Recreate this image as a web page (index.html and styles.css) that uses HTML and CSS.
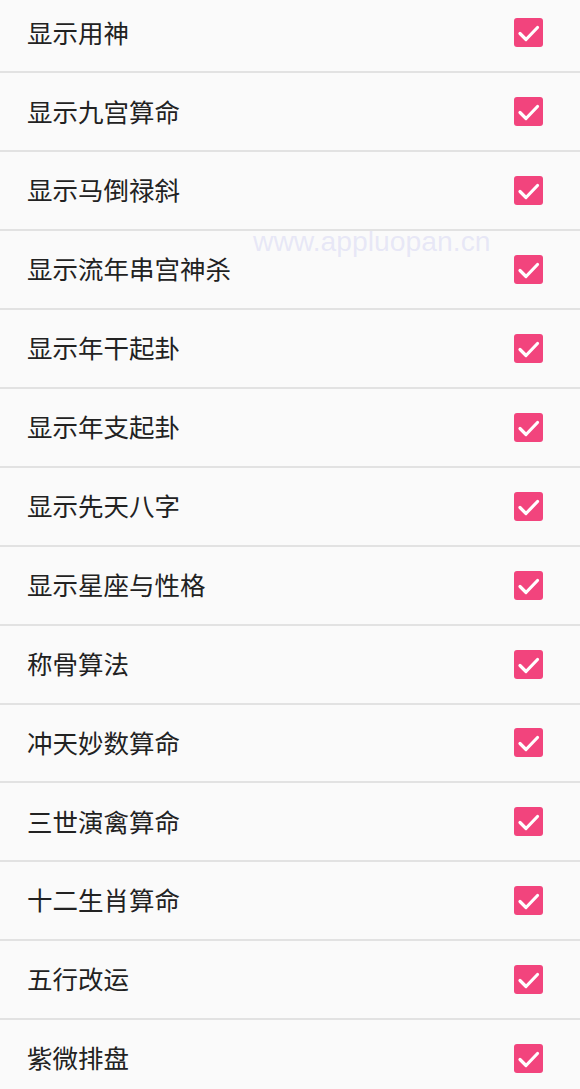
FILE: index.html
```html
<!DOCTYPE html>
<html lang="zh">
<head>
<meta charset="utf-8">
<link rel="stylesheet" href="styles.css">
</head>
<body>
<div class="page">
  <ul class="list">
    <li class="row"><span class="label">显示用神</span><span class="box"><svg viewBox="0 0 29 29"><path d="M6 15.5 L12 21.5 L23.5 9.5"/></svg></span></li>
    <li class="row"><span class="label">显示九宫算命</span><span class="box"><svg viewBox="0 0 29 29"><path d="M6 15.5 L12 21.5 L23.5 9.5"/></svg></span></li>
    <li class="row"><span class="label">显示马倒禄斜</span><span class="box"><svg viewBox="0 0 29 29"><path d="M6 15.5 L12 21.5 L23.5 9.5"/></svg></span></li>
    <li class="row"><span class="label">显示流年串宫神杀</span><span class="box"><svg viewBox="0 0 29 29"><path d="M6 15.5 L12 21.5 L23.5 9.5"/></svg></span></li>
    <li class="row"><span class="label">显示年干起卦</span><span class="box"><svg viewBox="0 0 29 29"><path d="M6 15.5 L12 21.5 L23.5 9.5"/></svg></span></li>
    <li class="row"><span class="label">显示年支起卦</span><span class="box"><svg viewBox="0 0 29 29"><path d="M6 15.5 L12 21.5 L23.5 9.5"/></svg></span></li>
    <li class="row"><span class="label">显示先天八字</span><span class="box"><svg viewBox="0 0 29 29"><path d="M6 15.5 L12 21.5 L23.5 9.5"/></svg></span></li>
    <li class="row"><span class="label">显示星座与性格</span><span class="box"><svg viewBox="0 0 29 29"><path d="M6 15.5 L12 21.5 L23.5 9.5"/></svg></span></li>
    <li class="row"><span class="label">称骨算法</span><span class="box"><svg viewBox="0 0 29 29"><path d="M6 15.5 L12 21.5 L23.5 9.5"/></svg></span></li>
    <li class="row"><span class="label">冲天妙数算命</span><span class="box"><svg viewBox="0 0 29 29"><path d="M6 15.5 L12 21.5 L23.5 9.5"/></svg></span></li>
    <li class="row"><span class="label">三世演禽算命</span><span class="box"><svg viewBox="0 0 29 29"><path d="M6 15.5 L12 21.5 L23.5 9.5"/></svg></span></li>
    <li class="row"><span class="label">十二生肖算命</span><span class="box"><svg viewBox="0 0 29 29"><path d="M6 15.5 L12 21.5 L23.5 9.5"/></svg></span></li>
    <li class="row"><span class="label">五行改运</span><span class="box"><svg viewBox="0 0 29 29"><path d="M6 15.5 L12 21.5 L23.5 9.5"/></svg></span></li>
    <li class="row"><span class="label">紫微排盘</span><span class="box"><svg viewBox="0 0 29 29"><path d="M6 15.5 L12 21.5 L23.5 9.5"/></svg></span></li>
  </ul>
  <div class="watermark">www.appluopan.cn</div>
</div>
</body>
</html>
```

FILE: styles.css
```css
html, body {
  margin: 0;
  padding: 0;
  background: #fafafa;
}
.page {
  position: relative;
  width: 580px;
  height: 1089px;
  overflow: hidden;
  background: #fafafa;
}
.list {
  list-style: none;
  margin: -5.5px 0 0 0;
  padding: 0;
}
.row {
  display: flex;
  align-items: center;
  justify-content: space-between;
  height: 76.9px;
  padding: 0 37px 0 27px;
  border-bottom: 2px solid #e2e2e2;
}
.label {
  font-family: "Noto Sans CJK SC", "Noto Sans", sans-serif;
  font-size: 25.5px;
  color: #222222;
  line-height: 1;
  padding-bottom: 3px;
}
.box {
  display: block;
  width: 29px;
  height: 29px;
  border-radius: 3px;
  background: #f2447d;
}
.box svg {
  display: block;
  width: 29px;
  height: 29px;
}
.box path {
  fill: none;
  stroke: #ffffff;
  stroke-width: 3.2;
  stroke-linecap: round;
  stroke-linejoin: round;
}
.watermark {
  position: absolute;
  left: 253px;
  top: 225px;
  font-family: "Liberation Sans", Arial, sans-serif;
  font-size: 28.3px;
  color: rgba(200, 200, 240, 0.38);
  white-space: nowrap;
}
```
